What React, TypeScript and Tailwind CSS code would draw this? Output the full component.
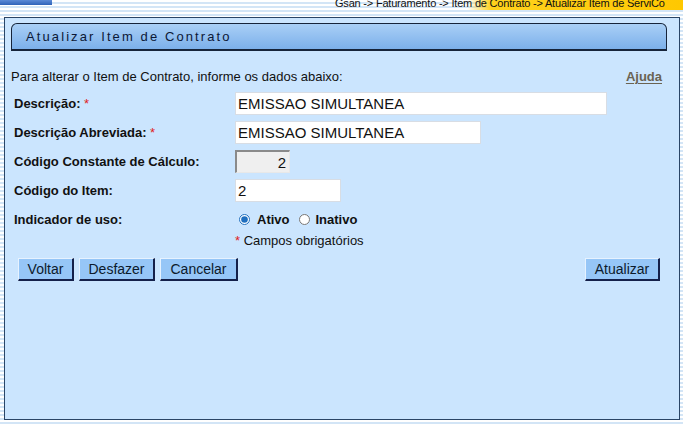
import { useState } from 'react';

const stripes =
  'bg-[repeating-linear-gradient(to_bottom,#ffffff_0px,#ffffff_2px,#d3e5f6_2px,#d3e5f6_4px)]';

function Label({ text, required }: { text: string; required?: boolean }) {
  return (
    <div className="font-bold text-[13px] text-[#111] leading-none pl-[3px] whitespace-nowrap">
      {text}
      {required && <span className="text-[#e02020] font-normal"> *</span>}
    </div>
  );
}

function Btn({ children, w }: { children: string; w: string }) {
  return (
    <button
      type="button"
      className={`${w} h-[23px] bg-[#96c6f7] text-[14px] leading-none text-[#0c1a2c] border-t border-l border-t-[#e6f2ff] border-l-[#e6f2ff] border-b-2 border-r-2 border-b-[#14204a] border-r-[#14204a]`}
    >
      {children}
    </button>
  );
}

export default function App() {
  const [uso, setUso] = useState('ativo');

  return (
    <div
      className={`w-[683px] h-[425px] overflow-hidden ${stripes}`}
      style={{ fontFamily: '"Liberation Sans", Arial, sans-serif' }}
    >
      {/* faixa do topo */}
      <div className="h-[17px] flex items-start">
        <div className="w-[52px] h-[5px] bg-gradient-to-b from-[#5b8ad6] to-[#2f62b8]" />
        <div className="flex-1" />
        <div className="h-[10px] w-[348px] flex items-end bg-gradient-to-r from-transparent from-[38%] via-[#ffd21c] via-[45%] to-[#ffc800]">
          <span className="text-[11px] leading-none text-[#111] tracking-[-0.2px] mb-[1px] whitespace-nowrap">
            Gsan -&gt; Faturamento -&gt; Item de Contrato -&gt; Atualizar Item de ServiCo
          </span>
        </div>
      </div>

      {/* painel */}
      <div className="ml-[4px] w-[676px] h-[403px] bg-[#cbe5fe] border border-[#2a4566] pt-[5px] pl-[6px] pr-[12px]">
        <div className="h-[28px] rounded-tl-[6px] rounded-tr-[6px] border border-[#16243a] border-b-2 bg-gradient-to-b from-[#a9cff6] to-[#7cb0ea] flex items-center pl-[14px]">
          <span className="text-[13px] tracking-[2.1px] text-[#0c1836]">Atualizar Item de Contrato</span>
        </div>

        <div className="mt-[19px] flex items-center justify-between pr-[5px]">
          <span className="text-[13px] leading-none text-[#111]">
            Para alterar o Item de Contrato, informe os dados abaixo:
          </span>
          <a className="font-bold text-[13px] leading-none text-[#6a6352] underline underline-offset-2">Ajuda</a>
        </div>

        <div className="mt-[9px] grid grid-cols-[224px_1fr] gap-y-[6px] items-center">
          <Label text="Descrição:" required />
          <input
            readOnly
            value="EMISSAO SIMULTANEA"
            className="w-[372px] h-[23px] bg-white border border-[#d8dde4] px-[2px] text-[15px] text-[#111] outline-none"
          />
          <Label text="Descrição Abreviada:" required />
          <input
            readOnly
            value="EMISSAO SIMULTANEA"
            className="w-[246px] h-[23px] bg-white border border-[#d8dde4] px-[2px] text-[15px] text-[#111] outline-none"
          />
          <Label text="Código Constante de Cálculo:" />
          <input
            readOnly
            value="2"
            className="w-[55px] h-[23px] bg-[#efefef] border-t-2 border-l-2 border-t-[#8a8a8a] border-l-[#8a8a8a] border-r border-b border-r-[#e8e8e8] border-b-[#e8e8e8] px-[3px] text-right text-[15px] text-[#111] outline-none"
          />
          <Label text="Código do Item:" />
          <input
            readOnly
            value="2"
            className="w-[106px] h-[23px] bg-white border border-[#d8dde4] px-[2px] text-[15px] text-[#111] outline-none"
          />
          <div className="h-[23px] flex items-center">
            <Label text="Indicador de uso:" />
          </div>
          <div className="flex items-center pl-[4px] text-[13px] font-bold text-[#111]">
            <label className="flex items-center gap-[7px]">
              <input
                type="radio"
                name="uso"
                checked={uso === 'ativo'}
                onChange={() => setUso('ativo')}
                className="w-[11px] h-[11px] m-0 accent-[#1f6fbf]"
              />
              Ativo
            </label>
            <label className="flex items-center gap-[6px] ml-[9px]">
              <input
                type="radio"
                name="uso"
                checked={uso === 'inativo'}
                onChange={() => setUso('inativo')}
                className="w-[11px] h-[11px] m-0 accent-[#1f6fbf]"
              />
              Inativo
            </label>
          </div>
          <div />
          <div className="-mt-[3px] text-[13px] leading-none text-[#111]">
            <span className="text-[#e02020]">*</span> Campos obrigatórios
          </div>
        </div>

        <div className="mt-[11px] flex items-center pl-[7px] pr-[7px]">
          <div className="flex gap-[5px]">
            <Btn w="w-[56px]">Voltar</Btn>
            <Btn w="w-[76px]">Desfazer</Btn>
            <Btn w="w-[78px]">Cancelar</Btn>
          </div>
          <div className="flex-1" />
          <Btn w="w-[75px]">Atualizar</Btn>
        </div>
      </div>
    </div>
  );
}
